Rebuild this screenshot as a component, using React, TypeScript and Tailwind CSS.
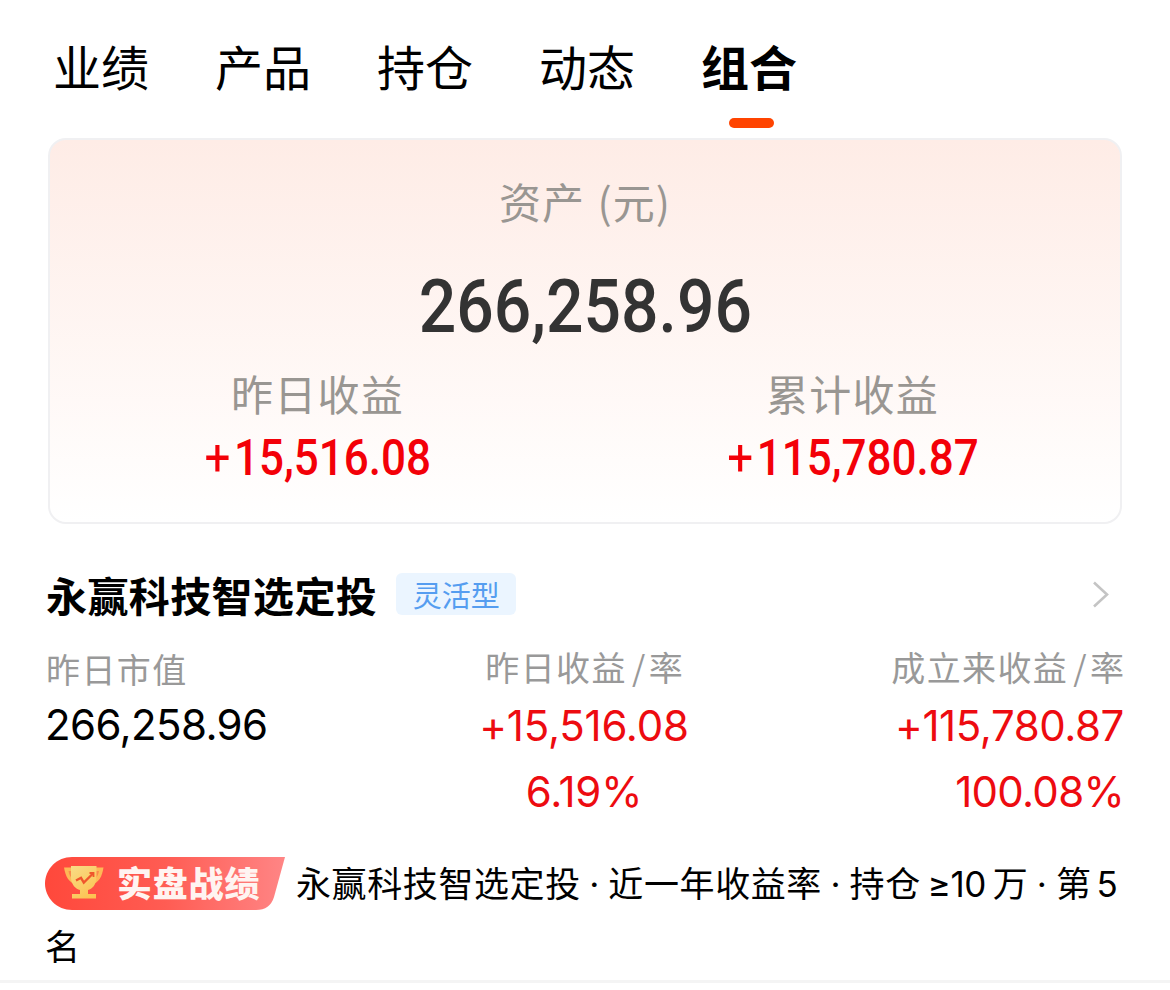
import clsx from 'clsx'
import { useState } from 'react'

const tabs = ['业绩', '产品', '持仓', '动态', '组合']

const summary = [
    { label: '昨日收益', value: '15,516.08' },
    { label: '累计收益', value: '115,780.87' }
]

function RecordBadge() {
    return (
        <span className="relative inline-flex h-[54px] w-[240px] shrink-0 items-center">
            <svg className="absolute inset-0" width="240" height="54" viewBox="0 0 240 54" fill="none">
                <defs>
                    <linearGradient id="badge" x1="0" y1="0" x2="240" y2="0" gradientUnits="userSpaceOnUse">
                        <stop stopColor="#ff483b" />
                        <stop offset="0.5" stopColor="#ff5c53" />
                        <stop offset="1" stopColor="#ff8585" />
                    </linearGradient>
                    <linearGradient id="cup" x1="27" y1="8" x2="52" y2="42" gradientUnits="userSpaceOnUse">
                        <stop stopColor="#f8dc86" />
                        <stop offset="1" stopColor="#fdbf4c" />
                    </linearGradient>
                </defs>
                <path d="M27 0H240L229 40Q225 53 211 53H27C12 53 0 41 0 26.500S12 0 27 0Z" fill="url(#badge)" />
                <path d="M19 10.500H58.500C57 20 54 25 47 27.500H30.500C24 25 20.500 20 19 10.500Z" fill="#fdb956" />
                <path d="M23.500 14H26.500V21C25 19 24 17 23.500 14ZM54 14H51V21C52.500 19 53.500 17 54 14Z" fill="#fb8a4c" />
                <path d="M26 9H51.500V20C51.500 28 47 32 43 33V37H51V41.500H27V37H35V33C31 32 26 28 26 20Z" fill="url(#cup)" />
                <path d="M31 23.500L36 20.800L38.800 25.500L48 16.500" stroke="#f0562c" strokeWidth="2.400" />
                <path d="M44.500 16H48.500V20" stroke="#f0562c" strokeWidth="1.800" />
            </svg>
            <span className="relative -top-0.5 pl-[72px] text-[35px] leading-[54px] font-black tracking-[0.800px] text-[#fff4f1]">实盘战绩</span>
        </span>
    )
}

function RateLabel({ text }: { text: string }) {
    return (
        <p className="h-[54px] leading-[52px] tracking-[1.400px]">
            {text}
            <span className="mr-[2px] ml-[5px]">/</span>
            <span className="tracking-normal">率</span>
        </p>
    )
}

export default function App() {
    const [active, setActive] = useState('组合')

    return (
        <div className="h-[990px] w-[1170px] overflow-hidden bg-white font-['Noto_Sans_CJK_SC',sans-serif] text-black">
            <nav className="flex h-[138px] gap-[66px] pt-[33px] pl-[53px]">
                {tabs.map((tab) => (
                    <button
                        key={tab}
                        onClick={() => setActive(tab)}
                        className={clsx('flex flex-col items-center text-[48px] leading-[64px]', active === tab && 'font-bold')}
                    >
                        {tab}
                        {active === tab && <span className="mt-[21px] ml-1 h-[10px] w-[45px] rounded-full bg-[#ff4400]" />}
                    </button>
                ))}
            </nav>

            <section className="mx-12 h-[386px] rounded-[18px] border-2 border-[#f0f0f2] bg-linear-to-b from-[#feece6] to-white pt-[33px] text-center">
                <p className="text-[42px] leading-[56px] tracking-[1px] text-[#999692]">
                    资产 <span className="ml-0.5">(元)</span>
                </p>
                <p className="mt-[22px] h-[111px] font-['Roboto',sans-serif] text-[75px] leading-[110px] font-medium text-[#333]">
                    <span className="inline-block scale-x-[0.88]">266,258.96</span>
                </p>
                <div className="flex">
                    {summary.map((item) => (
                        <div key={item.label} className="w-[537px]">
                            <p className="h-[64px] text-[42px] leading-[62px] tracking-[1.200px] text-[#999692]">{item.label}</p>
                            <p className="font-['Roboto',sans-serif] text-[50px] leading-[64px] font-medium text-[#f30008]">
                                <span className="inline-block scale-x-[0.88]">
                                    <span className="mr-1 text-[52px] leading-none font-normal">+</span>
                                    {item.value}
                                </span>
                            </p>
                        </div>
                    ))}
                </div>
            </section>

            <section className="pr-[46px] pl-[46px]">
                <div className="mt-[49px] flex h-[42px] items-center">
                    <h2 className="text-[41px] leading-[40px] font-bold tracking-[0.400px]">永赢科技智选定投</h2>
                    <span className="ml-[19px] h-[42px] w-[120px] rounded-md bg-[#ebf5ff] text-center text-[29px] leading-[42px] text-[#559df0]">灵活型</span>
                    <svg className="mr-[13px] ml-auto" width="20" height="28" viewBox="0 0 20 28" fill="none" stroke="#c4c4c4" strokeWidth="2.600">
                        <path d="M3 2.500L16 14.500L3 26.500" />
                    </svg>
                </div>

                <div className="mt-[26px] grid h-[216px] grid-cols-3 text-[34px] text-[#999]">
                    <div>
                        <p className="h-[55px] leading-[56px] tracking-[1.400px]">昨日市值</p>
                        <p className="-ml-px font-['Inter',sans-serif] text-[42px] leading-[57px] tracking-[-0.600px] text-black">266,258.96</p>
                    </div>
                    <div className="pr-0.5 text-center">
                        <RateLabel text="昨日收益" />
                        <div className="-mt-0.5 font-['Inter',sans-serif] text-[42px] leading-[66px] tracking-[-0.200px] text-[#ed0b10]">
                            <p>+15,516.08</p>
                            <p>6.19%</p>
                        </div>
                    </div>
                    <div className="text-right">
                        <RateLabel text="成立来收益" />
                        <div className="-mt-0.5 font-['Inter',sans-serif] text-[42px] leading-[66px] tracking-[-0.400px] text-[#ed0b10]">
                            <p>+115,780.87</p>
                            <p className="tracking-[-0.700px]">100.08%</p>
                        </div>
                    </div>
                </div>
            </section>

            <section className="ml-[45px] h-[123px]">
                <div className="flex items-center gap-[11px] whitespace-nowrap">
                    <RecordBadge />
                    <p className="font-['Inter','Noto_Sans_CJK_SC',sans-serif] text-[35px] leading-[54px] tracking-[0.600px] [word-spacing:-2px]">
                        永赢科技智选定投 · 近一年收益率 · 持仓
                        <span className="ml-[7px] tracking-[-0.500px]">≥10</span>
                        <span className="ml-[7px]">万 · 第</span>
                        <span className="ml-[5px]">5</span>
                    </p>
                </div>
                <p className="mt-[7px] text-[35px] leading-[54px]">名</p>
            </section>
            <div className="h-[3px] bg-[#f4f4f4]" />
        </div>
    )
}
